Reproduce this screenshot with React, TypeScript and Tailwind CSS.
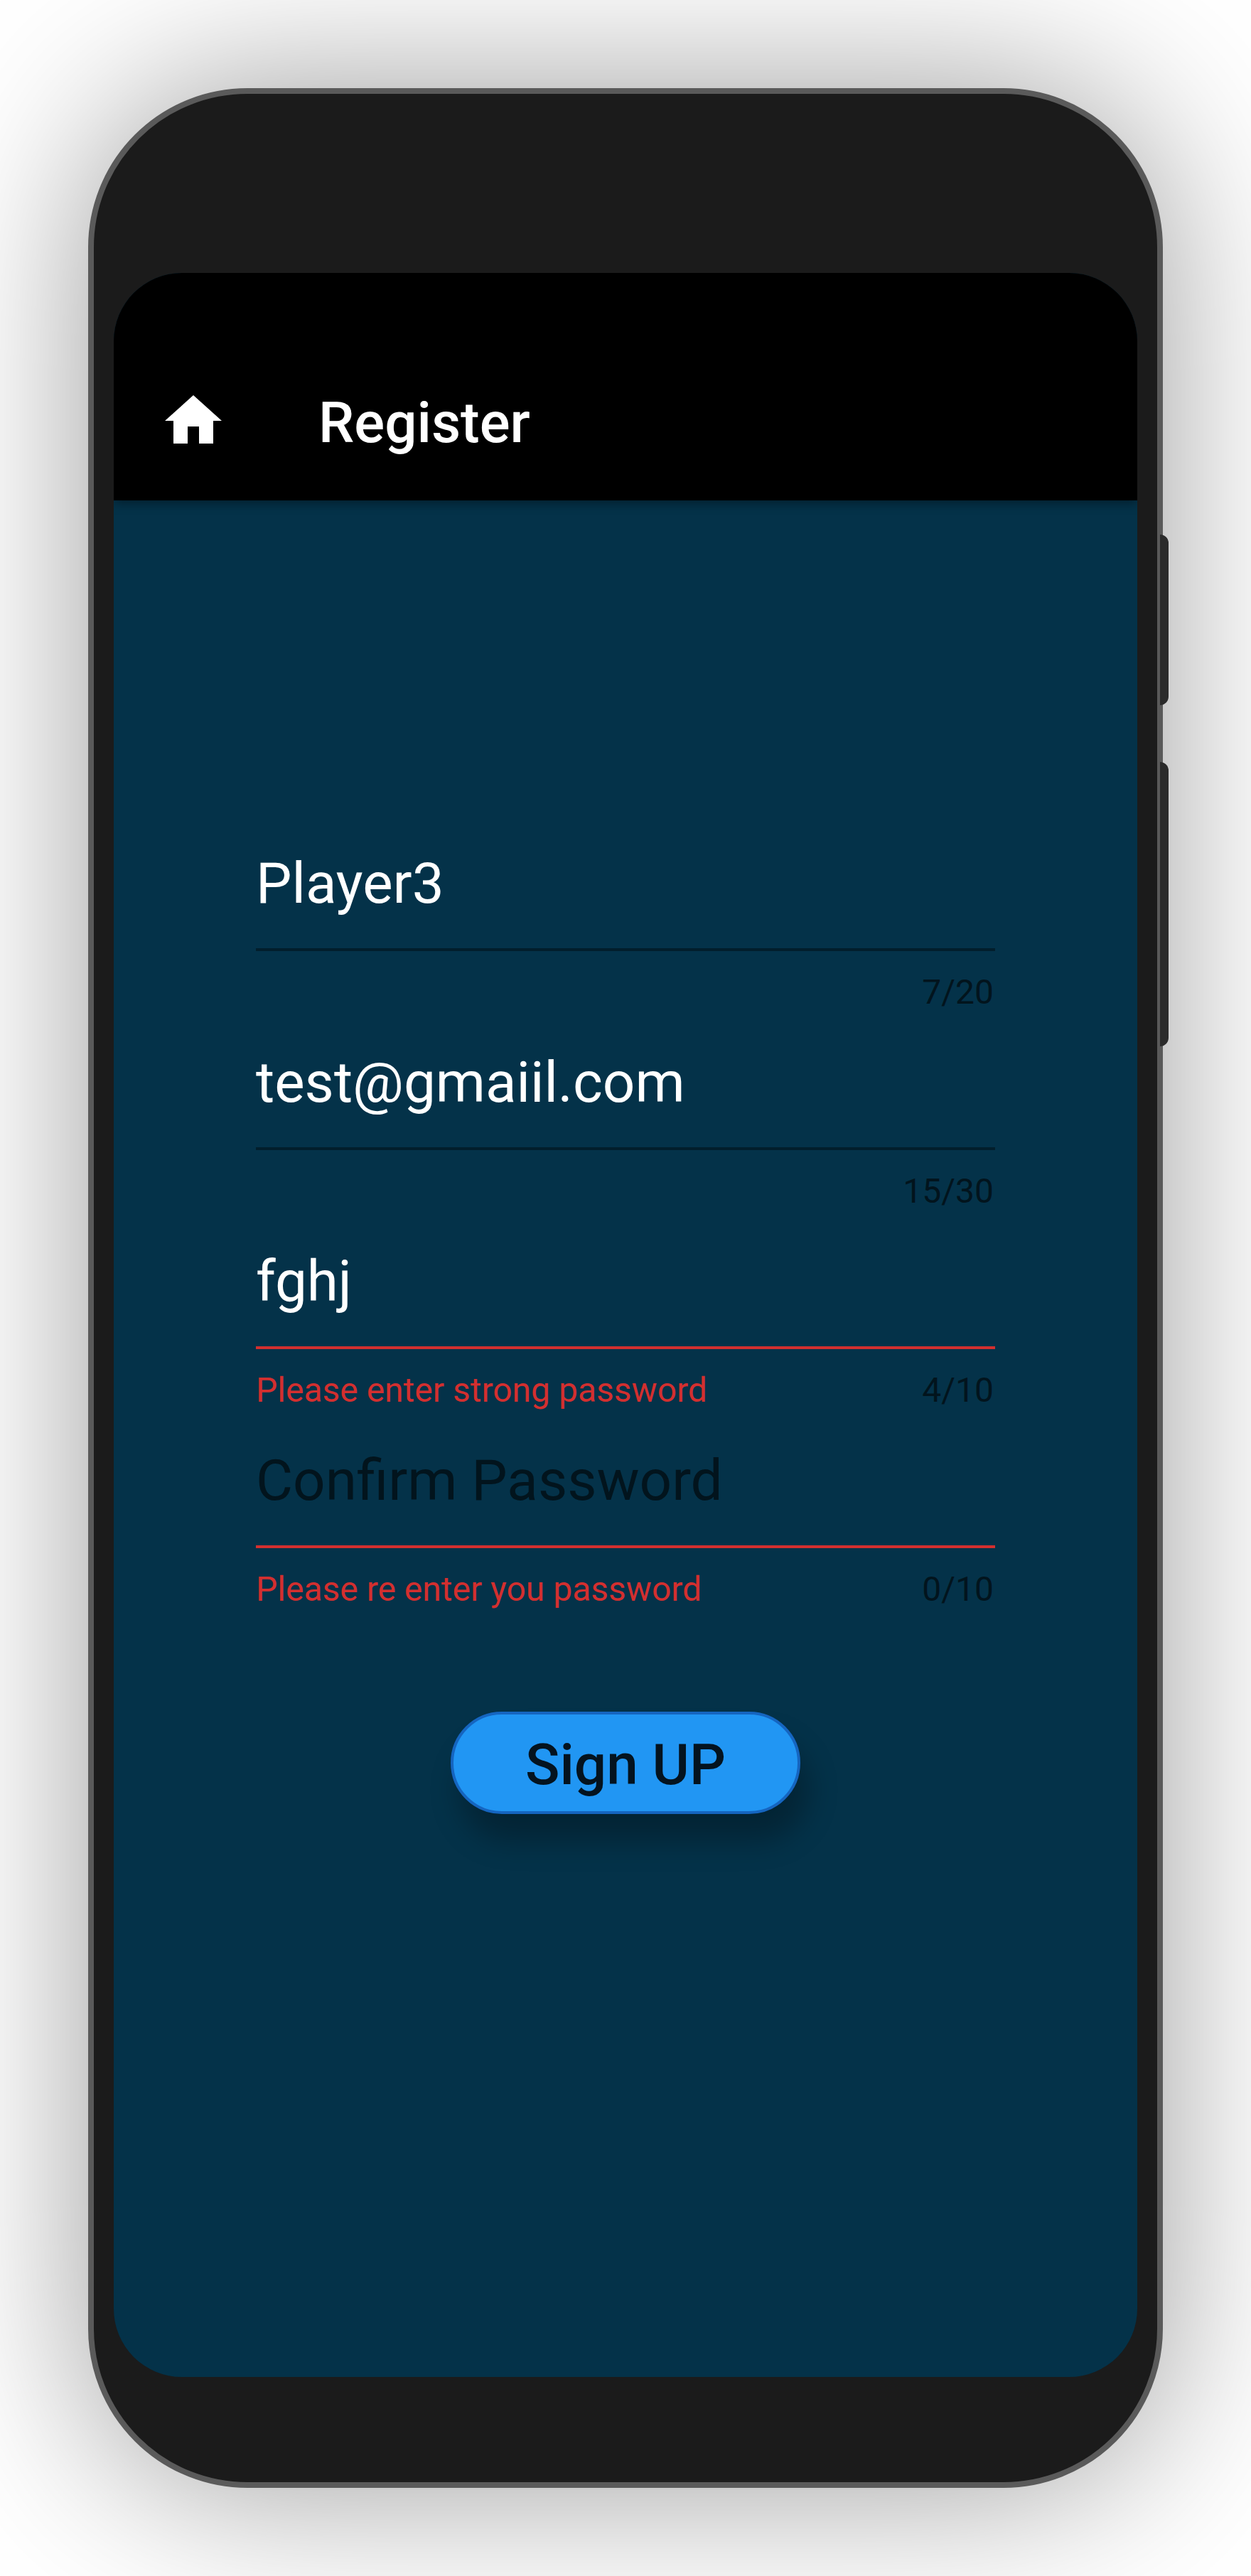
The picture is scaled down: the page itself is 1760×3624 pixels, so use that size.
type FieldProps = {
  text: string;
  counter: string;
  placeholder?: boolean;
  error?: string;
};

const fields: FieldProps[] = [
  { text: "Player3", counter: "7/20" },
  { text: "test@gmaiil.com", counter: "15/30" },
  { text: "fghj", counter: "4/10", error: "Please enter strong password" },
  { text: "Confirm Password", counter: "0/10", placeholder: true, error: "Please re enter you password" },
];

function Field({ text, counter, placeholder, error }: FieldProps) {
  return (
    <div className="flex h-[280px] flex-col pt-[51px] whitespace-nowrap">
      <div className={`h-24 text-[80px] leading-[96px] ${placeholder ? "text-[#02141d]" : "text-white"}`}>
        {text}
      </div>
      <div className={`mt-[43px] h-1 shrink-0 ${error ? "bg-[#d32f2f]" : "bg-[#021e2c]"}`} />
      <div className="mt-[29px] flex justify-between pr-0.5 text-[48px] leading-[57px]">
        <span className="text-[#d32f2f]">{error}</span>
        <span className="text-[#02141d]">{counter}</span>
      </div>
    </div>
  );
}

export default function App() {
  return (
    <div className="h-[3624px] w-[1760px] overflow-hidden bg-white p-[124px] font-['Roboto',sans-serif]">
      <div className="relative h-[3376px] w-[1512px] rounded-[224px] border-8 border-[#5a5a5a] bg-[#1b1b1b] px-7 pt-[252px] shadow-[0_0_240px_rgba(0,0,0,0.4)]">
        <div className="absolute top-[620px] -right-4 h-[240px] w-3 rounded-r-[12px] bg-[#2b2b2b]" />
        <div className="absolute top-[940px] -right-4 h-[400px] w-3 rounded-r-[12px] bg-[#2b2b2b]" />

        <main className="h-[2960px] w-[1440px] overflow-hidden rounded-[96px] bg-[#043249]">
          <header className="relative flex h-[320px] items-center bg-black pt-24 pl-16 text-white shadow-[0_4px_14px_rgba(0,0,0,0.4)]">
            <svg viewBox="0 0 24 24" className="size-24 fill-white">
              <path d="M10 20v-6h4v6h5v-8h3L12 3 2 12h3v8z" />
            </svg>
            <h1 className="ml-32 pt-1.5 text-[80px] leading-[96px] font-medium">Register</h1>
          </header>

          <form className="px-[200px] pt-[440px]">
            {fields.map((field) => (
              <Field key={field.text} {...field} />
            ))}
            <button
              type="button"
              className="mx-auto mt-36 flex h-36 w-[492px] justify-center rounded-[72px] border-4 border-[#1565c0] bg-[#2196f3] pt-[23px] text-[80px] leading-[96px] font-medium text-[#04131f] shadow-[12px_38px_40px_rgba(0,0,0,0.28)]"
            >
              Sign UP
            </button>
          </form>
        </main>
      </div>
    </div>
  );
}
